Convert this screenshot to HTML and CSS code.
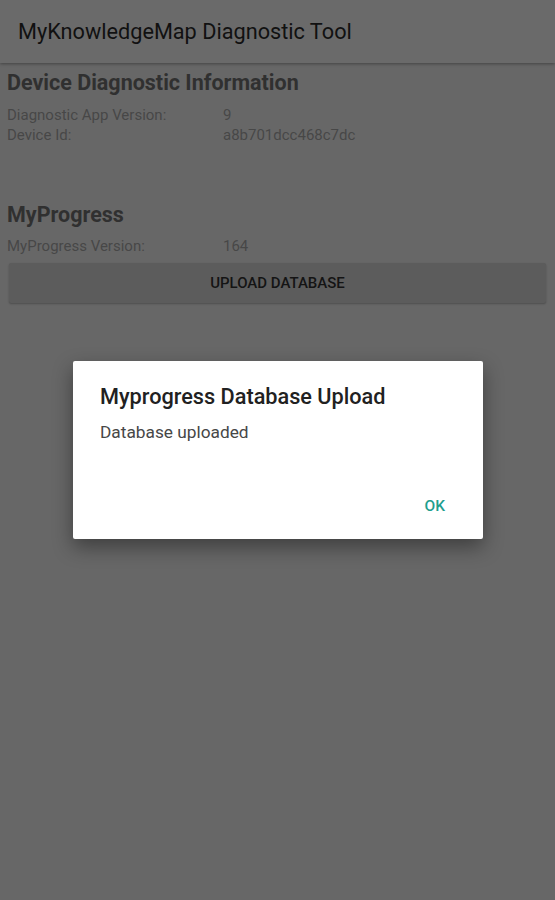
FILE: index.html
```html
<!DOCTYPE html>
<html>
<head>
<meta charset="utf-8">
<link rel="stylesheet" href="styles.css">
</head>
<body>
<div class="app">
  <header class="toolbar"><span class="toolbar-title">MyKnowledgeMap Diagnostic Tool</span></header>
  <main class="content">
    <section class="section">
      <h2 class="heading">Device Diagnostic Information</h2>
      <div class="row"><span class="label">Diagnostic App Version:</span><span class="value">9</span></div>
      <div class="row"><span class="label">Device Id:</span><span class="value">a8b701dcc468c7dc</span></div>
    </section>
    <section class="section section-progress">
      <h2 class="heading">MyProgress</h2>
      <div class="row"><span class="label">MyProgress Version:</span><span class="value">164</span></div>
      <button class="btn">UPLOAD DATABASE</button>
    </section>
  </main>
  <div class="dialog">
    <div class="dialog-title">Myprogress Database Upload</div>
    <div class="dialog-body">Database uploaded</div>
    <div class="dialog-actions"><span class="dialog-btn">OK</span></div>
  </div>
</div>
</body>
</html>
```
FILE: styles.css
```css
html, body { margin: 0; padding: 0; }
body {
  width: 555px;
  height: 900px;
  background: #676767;
  font-family: Roboto, "Noto Sans", sans-serif;
  overflow: hidden;
}
.app { position: relative; width: 555px; height: 900px; }
.toolbar {
  height: 63px;
  background: #6a6a6a;
  display: flex;
  align-items: center;
  padding-left: 18px;
  box-shadow: 0 1px 3px rgba(0,0,0,0.35);
  position: relative;
}
.toolbar-title { font-size: 21.7px; color: #111; }
.content { padding: 0 9px 0 7px; }
.section { display: flex; flex-direction: column; }
.heading {
  margin: 7px 0 9px;
  font-size: 21.5px;
  font-weight: 700;
  color: #303030;
  line-height: 26px;
}
.row { display: flex; font-size: 15px; line-height: 20px; color: #474747; }
.label { width: 216px; }
.section-progress { margin-top: 50px; }
.section-progress .heading { margin-bottom: 8px; }
.btn {
  margin: 7px 0 0 2px;
  height: 40px;
  border: none;
  border-radius: 2px;
  background: #5c5c5c;
  box-shadow: 0 1px 2px rgba(0,0,0,0.25);
  font-family: inherit;
  font-size: 15px;
  font-weight: 500;
  color: #141414;
}
.dialog {
  position: absolute;
  left: 73px;
  top: 361px;
  width: 410px;
  height: 178px;
  background: #fff;
  border-radius: 2px;
  box-shadow: 0 8px 20px rgba(0,0,0,0.4);
  box-sizing: border-box;
  padding: 22px 27px 0;
  display: flex;
  flex-direction: column;
}
.dialog-title { font-size: 21.7px; font-weight: 500; color: #212121; line-height: 28px; }
.dialog-body { margin-top: 11px; font-size: 17.3px; color: #474747; line-height: 20px; }
.dialog-actions { margin-top: auto; display: flex; justify-content: flex-end; padding: 0 11px 24px 0; }
.dialog-btn { font-size: 15.5px; font-weight: 500; color: #1f9e8e; }
```
